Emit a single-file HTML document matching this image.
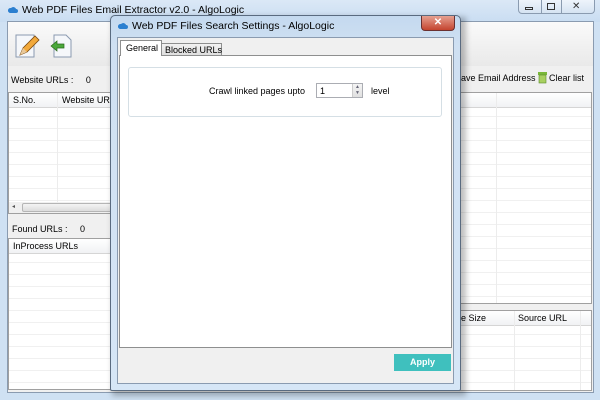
<!DOCTYPE html>
<html><head><style>
*{margin:0;padding:0;box-sizing:border-box}
body{width:600px;height:400px;overflow:hidden;background:#cfe1f3;font-family:"Liberation Sans",sans-serif;font-size:9px;color:#000;position:relative}
.a{position:absolute;white-space:nowrap}
.grid{background:#fff;border:1px solid #a0a0a0;background-image:repeating-linear-gradient(to bottom,#fff 0,#fff 11px,#f0f0f0 11px,#f0f0f0 12px)}
.hdr{background:linear-gradient(#fff,#f1f2f4);border-bottom:1px solid #d5d5d5;height:15px;line-height:15px}
</style></head><body>
<div class="a" style="left:0;top:0;width:600px;height:22px;background:linear-gradient(#dbe8f6,#c9ddf2)"></div>
<svg class="a" style="left:8px;top:6px" width="10" height="9"><path d="M2 7h6a2 2 0 0 0 0-4 3 3 0 0 0-5-1 2.5 2.5 0 0 0-1 5z" fill="#2b7fd0"/></svg>
<div class="a" style="left:22px;top:4px;font-size:10.5px">Web PDF Files Email Extractor v2.0 - AlgoLogic</div>
<div class="a" style="left:518px;top:0;width:77px;height:14px;border:1px solid #8a9bb0;border-top:none;border-radius:0 0 4px 4px;background:linear-gradient(#eef4fb,#d5e3f2)"></div>
<div class="a" style="left:541px;top:0;width:1px;height:14px;background:#8a9bb0"></div>
<div class="a" style="left:561px;top:0;width:1px;height:14px;background:#8a9bb0"></div>
<div class="a" style="left:525px;top:7px;width:8px;height:3px;border:1px solid #333"></div>
<div class="a" style="left:547px;top:3px;width:8px;height:7px;border:1px solid #333"></div>
<div class="a" style="left:572px;top:1px;font-size:10px;color:#333">✕</div>
<div class="a" style="left:7px;top:21px;width:587px;height:372px;background:#f0f0f0;border:1px solid #8a9bb0"></div>
<div class="a" style="left:8px;top:22px;width:585px;height:44px;background:linear-gradient(#fafafa,#e9e9e9)"></div>
<svg class="a" style="left:14px;top:33px" width="26" height="26"><rect x="2" y="2" width="18" height="22" fill="#f5f7fa" stroke="#8a9ab0"/><path d="M6 22l3-7 12-12 4 4-12 12z" fill="#f2a93b" stroke="#7a4a10" stroke-width=".8"/><path d="M6 22l3-7 4 4z" fill="#e8c89a"/></svg>
<svg class="a" style="left:48px;top:33px" width="26" height="26"><path d="M6 2h12l5 5v17H6z" fill="#f5f7fa" stroke="#8a9ab0"/><path d="M3 13l6-5v3h7v4H9v3z" fill="#4aa83a" stroke="#2a6a1a" stroke-width=".7"/></svg>
<div class="a" style="left:11px;top:75px">Website URLs :&nbsp;&nbsp;&nbsp;&nbsp; 0</div>
<div class="a grid" style="left:8px;top:92px;width:112px;height:122px"></div>
<div class="a hdr" style="left:9px;top:93px;width:110px;padding-left:4px">S.No.</div>
<div class="a" style="left:57px;top:93px;width:1px;height:110px;background:#ececec"></div>
<div class="a" style="left:62px;top:93px;line-height:15px">Website URLs</div>
<div class="a" style="left:9px;top:202px;width:110px;height:11px;background:#f0f0f0"></div>
<div class="a" style="left:22px;top:203px;width:95px;height:9px;border:1px solid #b5b5b5;border-radius:2px;background:linear-gradient(#f4f4f4,#dcdcdc)"></div>
<div class="a" style="left:12px;top:203px;font-size:6px;color:#555">◂</div>
<div class="a" style="left:12px;top:224px">Found URLs :&nbsp;&nbsp;&nbsp;&nbsp; 0</div>
<div class="a grid" style="left:8px;top:238px;width:112px;height:152px"></div>
<div class="a hdr" style="left:9px;top:239px;width:110px;padding-left:4px">InProcess URLs</div>
<div class="a" style="left:461px;top:73px">ave Email Address</div>
<svg class="a" style="left:537px;top:72px" width="11" height="12"><rect x="1" y="0" width="9" height="3" fill="#7ab83a"/><rect x="2" y="3" width="7" height="8" fill="#a8d060" stroke="#5a8a2a" stroke-width=".6"/></svg>
<div class="a" style="left:549px;top:73px">Clear list</div>
<div class="a grid" style="left:455px;top:92px;width:137px;height:212px"></div>
<div class="a hdr" style="left:456px;top:93px;width:135px"></div>
<div class="a" style="left:496px;top:93px;width:1px;height:210px;background:#ececec"></div>
<div class="a grid" style="left:455px;top:310px;width:137px;height:81px"></div>
<div class="a hdr" style="left:456px;top:311px;width:135px"></div>
<div class="a" style="left:461px;top:311px;line-height:15px">e Size</div>
<div class="a" style="left:514px;top:311px;width:1px;height:79px;background:#ececec"></div>
<div class="a" style="left:518px;top:311px;line-height:15px">Source URL</div>
<div class="a" style="left:580px;top:311px;width:1px;height:79px;background:#ececec"></div>
<div class="a" style="left:112px;top:17px;width:354px;height:379px;background:rgba(0,0,0,.25);filter:blur(3px)"></div>
<div class="a" style="left:110px;top:15px;width:351px;height:376px;background:linear-gradient(#c4d9ef,#cfe0f2 30px,#d6e6f6);border:1px solid #5a6b80;border-radius:5px 5px 2px 2px"></div>
<svg class="a" style="left:118px;top:22px" width="10" height="9"><path d="M2 7h6a2 2 0 0 0 0-4 3 3 0 0 0-5-1 2.5 2.5 0 0 0-1 5z" fill="#2b7fd0"/></svg>
<div class="a" style="left:132px;top:20px;font-size:10.5px">Web PDF Files Search Settings - AlgoLogic</div>
<div class="a" style="left:421px;top:16px;width:34px;height:15px;border:1px solid #6a3030;border-top:none;border-radius:0 0 4px 4px;background:linear-gradient(#e6a090,#c4442e);color:#fff;text-align:center;font-size:10px;font-weight:bold;line-height:13px">✕</div>
<div class="a" style="left:117px;top:37px;width:337px;height:347px;background:#f0f0f0;border:1px solid #8a9bb0"></div>
<div class="a" style="left:119px;top:55px;width:333px;height:293px;background:#fff;border:1px solid #8e8f8f"></div>
<div class="a" style="left:120px;top:40px;width:42px;height:16px;background:#fff;border:1px solid #8e8f8f;border-bottom:none;padding:2px 0 0 5px">General</div>
<div class="a" style="left:162px;top:43px;width:60px;height:13px;background:linear-gradient(#f2f2f2,#dedede);border:1px solid #8e8f8f;border-left:none;padding:1px 0 0 3px">Blocked URLs</div>
<div class="a" style="left:128px;top:67px;width:314px;height:50px;border:1px solid #d5dfe5;border-radius:3px"></div>
<div class="a" style="left:209px;top:86px">Crawl linked pages upto</div>
<div class="a" style="left:316px;top:83px;width:47px;height:15px;border:1px solid #abadb3;background:#fff;padding:2px 0 0 3px">1</div>
<div class="a" style="left:352px;top:84px;width:10px;height:13px;background:linear-gradient(#f4f4f4,#e0e0e0);border-left:1px solid #ccc;font-size:5px;color:#667;text-align:center;line-height:6px">▲<br>▼</div>
<div class="a" style="left:371px;top:86px">level</div>
<div class="a" style="left:394px;top:354px;width:57px;height:17px;background:#3fc0be;color:#fff;font-weight:bold;text-align:center;line-height:17px">Apply</div>
</body></html>
